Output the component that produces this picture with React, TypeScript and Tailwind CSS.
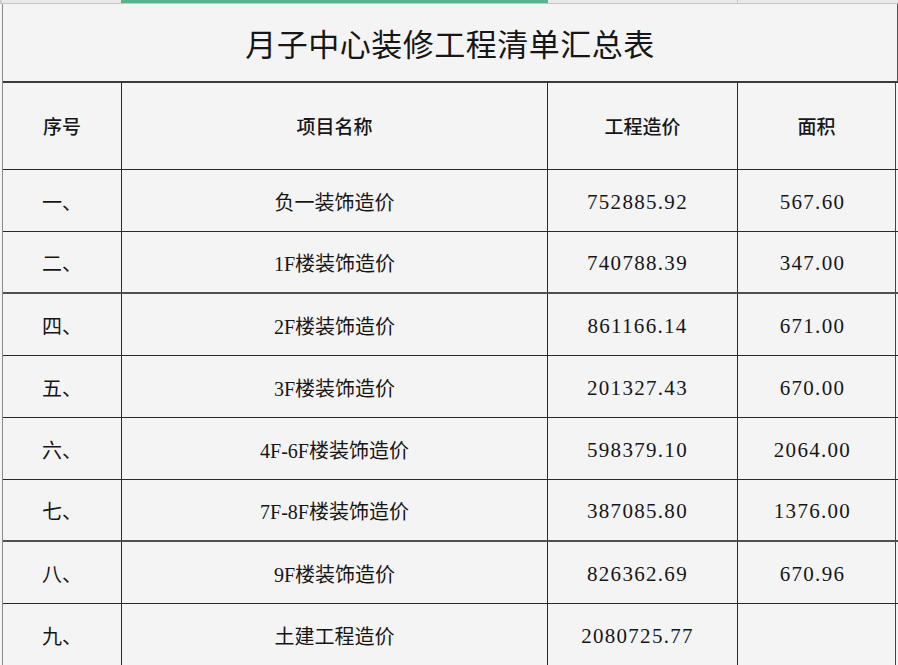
const rows: [string, string, string, string][] = [
  ["一、", "负一装饰造价", "752885.92", "567.60"],
  ["二、", "1F楼装饰造价", "740788.39", "347.00"],
  ["四、", "2F楼装饰造价", "861166.14", "671.00"],
  ["五、", "3F楼装饰造价", "201327.43", "670.00"],
  ["六、", "4F-6F楼装饰造价", "598379.10", "2064.00"],
  ["七、", "7F-8F楼装饰造价", "387085.80", "1376.00"],
  ["八、", "9F楼装饰造价", "826362.69", "670.96"],
  ["九、", "土建工程造价", "2080725.77", ""],
];

const cjk = { fontFamily: '"Liberation Serif", "Noto Sans CJK SC", serif' };

export default function App() {
  return (
    <div
      className="w-[898px] h-[665px] overflow-hidden bg-[#f4f4f5] text-[#161616]"
      style={cjk}
    >
      {/* sheet tab strip */}
      <div className="flex h-[4px] border-b border-[#c4c4c4] bg-[#e9e9ea]">
        <div className="w-[121px] border-l-2 border-[#cfcfcf]" />
        <div className="w-[427px] bg-[#55b58c]" />
        <div className="w-[189px]" />
        <div className="flex-1 border-l border-[#c8c8c8]" />
      </div>

      <div className="ml-[2px] border-l border-[#8a8a8a]">
        {/* title */}
        <div className="flex h-[79px] items-center justify-center border-b-2 border-r border-b-[#3a3a3a] border-r-[#555] pt-[8px] text-[31px] tracking-[0.5px]">
          月子中心装修工程清单汇总表
        </div>

        {/* header */}
        <div className="grid h-[87px] grid-cols-[119px_426px_190px_158px] border-b border-[#2a2a2a] text-[19px] font-medium">
          <div className="flex items-center justify-center border-r border-[#2a2a2a] pt-[5px]">序号</div>
          <div className="flex items-center justify-center border-r border-[#2a2a2a] pt-[5px]">项目名称</div>
          <div className="flex items-center justify-center border-r border-[#2a2a2a] pt-[5px]">工程造价</div>
          <div className="flex items-center justify-center border-r border-[#444] pt-[5px]">面积</div>
        </div>

        {rows.map(([no, name, cost, area], i) => (
          <div
            key={no}
            className={`grid h-[62px] grid-cols-[119px_426px_190px_158px] text-[20px] ${
              i === 1 || i === 5
                ? "border-b-2 border-[#505050]"
                : "border-b border-[#2a2a2a]"
            }`}
          >
            <div className="flex items-center justify-center border-r border-[#2a2a2a] pt-[4px]">{no}</div>
            <div className="flex items-center justify-center border-r border-[#2a2a2a] pt-[4px]">{name}</div>
            <div className="flex items-center justify-center border-r border-[#2a2a2a] pr-[10px] pt-[4px] text-[21px] tracking-[1.3px]">
              {cost}
            </div>
            <div className="flex items-center justify-center border-r border-[#444] pr-[8px] pt-[4px] text-[21px] tracking-[1.3px]">
              {area}
            </div>
          </div>
        ))}
      </div>
    </div>
  );
}
